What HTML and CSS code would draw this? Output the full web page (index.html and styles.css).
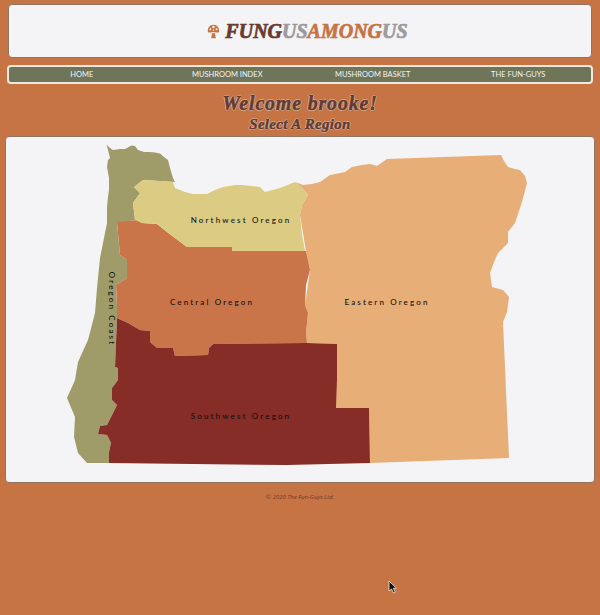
FILE: index.html
```html
<!DOCTYPE html>
<html lang="en">
<head>
<meta charset="utf-8">
<title>Fungus Among Us</title>
<link rel="stylesheet" href="styles.css">
</head>
<body>
<header class="brand">
  <svg class="logo-icon" viewBox="0 0 14 16" width="13" height="15" aria-hidden="true">
    <path class="cap" d="M1 8.200C.2 4.500 3 .7 7 .7s6.800 3.800 6 7.500c-.3 1-1.500 1.100-2.600.9-2.200-.5-4.600-.5-6.800 0C2.500 9.300 1.300 9.200 1 8.200Z"/>
    <path class="cap" d="M5.200 9.800h3.600c0 2 .3 3.500 .7 4.600.2.600-.3 1-1 1H5.500c-.7 0-1.200-.4-1-1 .4-1.100 .7-2.600 .7-4.600Z"/>
    <circle class="spot" cx="7" cy="3.200" r="1.300"/>
    <circle class="spot" cx="3.600" cy="5.600" r="1.100"/>
    <circle class="spot" cx="10.300" cy="5.600" r="1.100"/>
    <circle class="spot" cx="7" cy="6.700" r=".8"/>
  </svg>
  <span class="logo"><span class="l-brown">FUNG</span><span class="l-grey">US</span><span class="l-orange">AMONG</span><span class="l-grey">US</span></span>
</header>
<nav class="nav">
  <a>HOME</a>
  <a>MUSHROOM INDEX</a>
  <a>MUSHROOM BASKET</a>
  <a>THE FUN-GUYS</a>
</nav>
<h1 class="welcome">Welcome brooke!</h1>
<h2 class="select">Select A Region</h2>
<main class="map-card">
  <svg class="map" viewBox="6 137 588 345" width="588" height="345" role="img" aria-label="Map of Oregon regions">
    <path class="coast" d="M106.500 144.500 110 148 113 150 120 149 125 149 131.500 145.500 135 146 138 150 144 152 150 152 155 152.500 160 153.500 164 157 168 160 170 168 173 178 175 182 143 180 134 187 140 193 133 203 135 220 117 223 120 255 127 260 127 278 116 285 117 305 117 318 115 367 118 368 118 380 112 388 112 400 117 405 107 425 100 426 98 434 107 435 111 443 109 452 109 463 87 463 78 453 74 437 75 417 67 398 75 380 78 362 88 340 95 313 97 288 100 258 102 248 107 223 107 207 108 197 109 190 109 178 107 167 108 160 110 158 108 150Z"/>
    <path class="east" d="M295 182 303 185 312 184 320 182 330 175 345 172 352 167 362 165 370 164 377 166 387 159 501 155 504 161 508 167 515 169 520 170 525 176 527 183 522 202 515 223 508 232 508 243 498 253 494 262 490 273 492 287 503 290 509 297 507 312 503 322 509 458 370 463 369 408 336 408 337 344 307 343 306 333 308 313 305 305 310 270 306 251 300 215 302 205 308 195 302 188Z"/>
    <path class="central" d="M117 222 137 220 142 223 157 224 167 232 187 247 232 247 232 251 306 251 310 270 306 285 305 305 308 313 306 333 307 343 213 344 209 348 208 355 175 356 173 348 157 348 150 342 150 331 140 330 128 323 117 318 117 305 116 285 127 278 127 260 120 255Z"/>
    <path class="north" d="M134 187 143 180 160 181 173 182 175 188 185 192 193 194 207 194 215 190 223 187 235 185 242 185 260 187 265 192 280 188 295 182 302 188 308 195 302 205 300 215 302 235 305 251 232 251 232 247 187 247 167 232 157 224 142 223 135 220 133 203 140 193Z"/>
    <path class="south" d="M117 318 128 323 140 330 150 331 150 342 157 348 173 348 175 356 208 355 209 348 213 344 307 343 337 344 337 380 336 408 369 408 370 463 287 465 109 463 109 452 111 443 107 435 98 434 100 426 107 425 117 405 112 400 112 388 118 380 118 368 115 367Z"/>
    <text class="label" x="241" y="223">Northwest Oregon</text>
    <text class="label" x="212" y="305">Central Oregon</text>
    <text class="label" x="387" y="305">Eastern Oregon</text>
    <text class="label" x="241" y="419">Southwest Oregon</text>
    <text class="label" transform="translate(109 309) rotate(90)">Oregon Coast</text>
  </svg>
</main>
<footer class="footer">© 2020 The Fun-Guys Ltd.</footer>
<svg class="cursor" viewBox="0 0 10 14" width="10" height="14" aria-hidden="true"><path d="M1 1v10l2.500-2 2 4 1.800-.8-2-3.900h3.200Z"/></svg>
</body>
</html>
```
FILE: styles.css
```css
html, body { margin: 0; height: 615px; overflow: hidden; }
body {
  background: #c67443;
  padding: 4px 5px 0;
  box-sizing: border-box;
  position: relative;
  font-family: "Open Sans", sans-serif;
}
.brand {
  margin: 0 3px;
  height: 54px;
  box-sizing: border-box;
  background: #f4f3f5;
  border: 1px solid #8f7565;
  border-radius: 4px;
  display: flex;
  align-items: center;
  justify-content: center;
  gap: 5px;
  padding-left: 15px;
}
.logo-icon { flex: none; }
.cap { fill: #c67443; }
.spot { fill: #f4f3f5; }
.logo {
  font: italic bold 20px "Liberation Serif", serif;
  letter-spacing: 0;
  -webkit-text-stroke: .7px currentColor;
  line-height: 1;
}
.l-brown { color: #6a3a30; }
.l-grey { color: #9c9a9a; }
.l-orange { color: #c67443; }
.nav {
  margin: 7px 2px 0;
  height: 19px;
  box-sizing: border-box;
  background: #6e7559;
  border: 2px solid #f0e9e0;
  border-radius: 4px;
  display: grid;
  grid-template-columns: repeat(4, 1fr);
  align-items: center;
  justify-items: center;
  color: #f4f3f5;
  font: 7.500px Lato, sans-serif;
  line-height: 1;
}
.welcome, .select {
  margin: 0;
  text-align: center;
  font-family: "Liberation Serif", serif;
  font-style: italic;
  font-weight: bold;
  color: #663a33;
  -webkit-text-stroke: .5px #663a33;
  text-shadow: -1px 0 #d9b99a, 1px 0 #d9b99a, 0 -1px #d9b99a, 0 1px #d9b99a;
  line-height: 1;
}
.welcome { margin-top: 9px; font-size: 20px; letter-spacing: .8px; }
.select { margin-top: 4px; font-size: 15px; letter-spacing: .3px; }
.map-card {
  margin-top: 3.500px;
  height: 347px;
  box-sizing: border-box;
  background: #f4f3f5;
  border: 1px solid #8f7565;
  border-radius: 4px;
  overflow: hidden;
}
.map { display: block; }
.coast { fill: #a09c69; }
.north { fill: #dccc83; }
.central { fill: #c97549; }
.east { fill: #e7ae77; }
.south { fill: #852d26; }
.label {
  font: 500 8px Lato, sans-serif;
  letter-spacing: 2.150px;
  fill: #111;
  text-anchor: middle;
}
.footer {
  margin-top: 10px;
  text-align: center;
  font: italic 6px "Open Sans", sans-serif;
  color: #6a3a30;
}
.cursor { position: absolute; left: 388px; top: 580px; }
.cursor path { fill: #111; stroke: #f0e9e0; stroke-width: .8; }
```
